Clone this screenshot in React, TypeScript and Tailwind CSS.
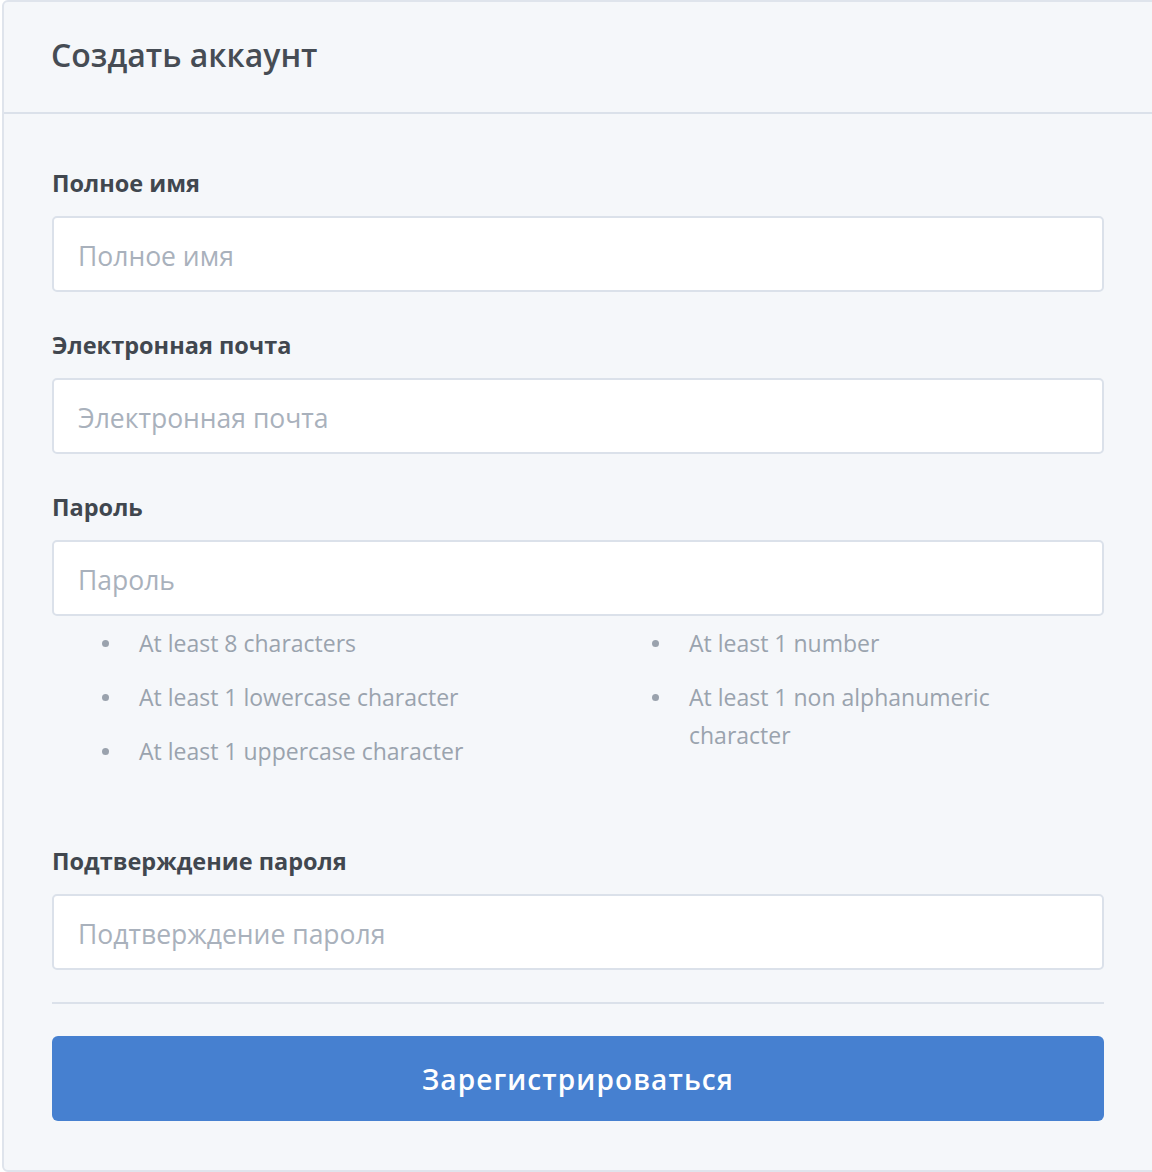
import React from "react"

const rulesLeft = ["At least 8 characters", "At least 1 lowercase character", "At least 1 uppercase character"]
const rulesRight = ["At least 1 number", "At least 1 non alphanumeric character"]

function Field({ label, type = "text" }: { label: string; type?: string }) {
  return (
    <div className="flex flex-col">
      <label className="text-[23.5px] leading-[30px] font-bold text-[#41474f] mb-[18px]">{label}</label>
      <input
        type={type}
        placeholder={label}
        className="h-[76px] w-full rounded-[5px] border-2 border-[#dbe1ea] bg-white px-[24px] pt-[3px] text-[26.5px] text-[#41474f] placeholder:text-[#a9b1bc] outline-none"
      />
    </div>
  )
}

function Rule({ text }: { text: string }) {
  return (
    <li className="flex items-start gap-[30px] text-[23px] leading-[38px] text-[#9aa3ae]">
      <span className="mt-[15.5px] h-[7px] w-[7px] shrink-0 rounded-full bg-[#9aa2ad]" />
      <span>{text}</span>
    </li>
  )
}

export default function App() {
  return (
    <div
      className="w-full overflow-hidden bg-white"
      style={{ fontFamily: '"Open Sans", "Noto Sans", sans-serif' }}
    >
      <div className="ml-[2px] w-[1160px] rounded-[6px] border-2 border-[#dfe4ec] bg-[#f5f7fa]">
        {/* header */}
        <div className="flex h-[112px] items-center border-b-2 border-[#dbe1ea] pl-[47px] pr-[48px] pb-[4px]">
          <h1 className="text-[32px] font-semibold text-[#464c54]">Создать аккаунт</h1>
        </div>

        {/* form */}
        <form className="w-[1148px] px-[48px] pt-[54px] pb-[49px]" onSubmit={(e) => e.preventDefault()}>
          <div className="flex flex-col gap-[38px]">
            <Field label="Полное имя" />
            <Field label="Электронная почта" type="email" />
            <div>
              <Field label="Пароль" type="password" />
              <div className="mt-[8px] flex pl-[50px]">
                <ul className="flex w-[550px] flex-col gap-[16px]">
                  {rulesLeft.map((r) => (
                    <Rule key={r} text={r} />
                  ))}
                </ul>
                <ul className="flex w-[370px] flex-col gap-[16px]">
                  {rulesRight.map((r) => (
                    <Rule key={r} text={r} />
                  ))}
                </ul>
              </div>
            </div>
          </div>

          <div className="mt-[76px]">
            <Field label="Подтверждение пароля" type="password" />
          </div>

          <hr className="my-[32px] border-t-2 border-[#dbe1ea]" />

          <button
            type="submit"
            className="h-[85px] w-full rounded-[6px] bg-[#4680d0] text-[28px] font-semibold tracking-[1.1px] text-white"
          >
            Зарегистрироваться
          </button>
        </form>
      </div>
    </div>
  )
}
